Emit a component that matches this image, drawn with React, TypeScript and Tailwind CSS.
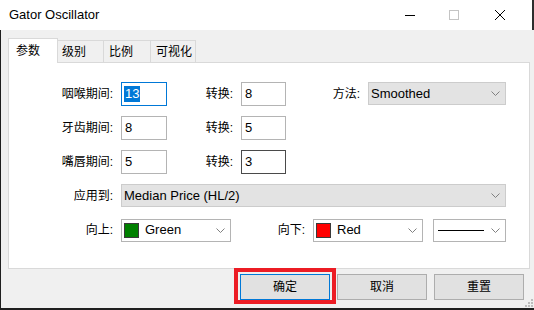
import React from "react";

function Chevron() {
  return (
    <svg width="9" height="5" viewBox="0 0 9 5" className="shrink-0">
      <path d="M0.5 0.5 L4.5 4.5 L8.5 0.5" fill="none" stroke="#808080" strokeWidth="1" />
    </svg>
  );
}

function TextBox({ value, width, state }: { value: string; width: string; state?: "focus" | "hover" }) {
  const border =
    state === "focus" ? "border-[#0078d7]" : state === "hover" ? "border-[#4a4a4a]" : "border-[#b4b4b4]";
  return (
    <div className={`ml-2 flex h-6 items-center border bg-white pl-[2px] text-[13px] ${width} ${border}`}>
      {state === "focus" ? (
        <span className="bg-[#0078d7] px-px leading-4 text-white">{value}</span>
      ) : (
        <span className="px-px">{value}</span>
      )}
    </div>
  );
}

function Label({ text, width }: { text: string; width: string }) {
  return <div className={`shrink-0 text-right text-[12px] ${width}`}>{text}</div>;
}

function ColorCombo({ color, name }: { color: string; name: string }) {
  return (
    <div className="ml-2 flex h-[23px] w-[110px] items-center border border-[#b4b4b4] bg-white pr-[5px]">
      <div className={`ml-[2px] size-[15px] border border-[#3a3a3a] ${color}`} />
      <span className="ml-[6px] flex-1 text-[13px]">{name}</span>
      <Chevron />
    </div>
  );
}

export default function App() {
  return (
    <div className="relative h-[310px] w-[534px] overflow-hidden bg-[#1f1f1f] font-['Liberation_Sans','Noto_Sans_CJK_SC',sans-serif] text-black">
      {/* title bar */}
      <div className="flex h-[30px] items-center border-r-2 border-[#2e2e2e] bg-white">
        <span className="ml-[9px] flex-1 text-[13px]">Gator Oscillator</span>
        <div className="mr-[34px] h-px w-[10px] bg-black" />
        <div className="mr-[36px] size-[10px] border border-[#c4c4c4]" />
        <svg width="10" height="10" viewBox="0 0 10 10" className="mr-[27px]">
          <path d="M0 0 L10 10 M10 0 L0 10" stroke="#000" strokeWidth="1" />
        </svg>
      </div>

      {/* body */}
      <div className="relative ml-px h-[278px] bg-[#f0f0f0] pl-[7px] pt-2">
        {/* tabs */}
        <div className="flex h-6 items-end text-[12px]">
          <div className="relative z-10 -mb-px flex h-[25px] w-[50px] items-center border border-b-0 border-[#d9d9d9] bg-white pl-[7px]">
            参数
          </div>
          <div className="flex h-[22px] w-[46px] items-center border-r border-t border-[#d9d9d9] pl-[4px]">级别</div>
          <div className="flex h-[22px] w-[47px] items-center border-r border-t border-[#d9d9d9] pl-[5px]">比例</div>
          <div className="flex h-[22px] w-[45px] items-center border-r border-t border-[#d9d9d9] pl-[5px]">可视化</div>
        </div>

        {/* panel */}
        <div className="flex h-[207px] w-[522px] flex-col gap-[10px] border border-[#d9d9d9] bg-white pt-[19px]">
          <div className="flex h-6 items-center">
            <Label text="咽喉期间:" width="w-[104px]" />
            <TextBox value="13" width="w-[46px]" state="focus" />
            <Label text="转换:" width="w-[66px]" />
            <TextBox value="8" width="w-[45px]" />
            <Label text="方法:" width="w-[74px]" />
            <div className="ml-2 flex h-[23px] w-[138px] items-center self-start border border-[#cccccc] bg-[#e3e3e3] pl-[2px] pr-[5px]">
              <span className="flex-1 text-[13px]">Smoothed</span>
              <Chevron />
            </div>
          </div>
          <div className="flex h-6 items-center">
            <Label text="牙齿期间:" width="w-[104px]" />
            <TextBox value="8" width="w-[46px]" />
            <Label text="转换:" width="w-[66px]" />
            <TextBox value="5" width="w-[45px]" />
          </div>
          <div className="flex h-6 items-center">
            <Label text="嘴唇期间:" width="w-[104px]" />
            <TextBox value="5" width="w-[46px]" />
            <Label text="转换:" width="w-[66px]" />
            <TextBox value="3" width="w-[45px]" state="hover" />
          </div>
          <div className="flex h-6 items-center">
            <Label text="应用到:" width="w-[104px]" />
            <div className="ml-2 flex h-[23px] w-[385px] items-center self-start border border-[#cccccc] bg-[#e3e3e3] pl-[2px] pr-[5px]">
              <span className="flex-1 text-[13px]">Median Price (HL/2)</span>
              <Chevron />
            </div>
          </div>
          <div className="flex h-6 items-center">
            <Label text="向上:" width="w-[104px]" />
            <ColorCombo color="bg-[#008000]" name="Green" />
            <Label text="向下:" width="w-[74px]" />
            <ColorCombo color="bg-[#ff0000]" name="Red" />
            <div className="ml-[10px] flex h-[23px] w-[73px] items-center border border-[#b4b4b4] bg-white pl-[4px] pr-[5px]">
              <div className="h-px w-[46px] bg-black" />
              <div className="flex-1" />
              <Chevron />
            </div>
          </div>
        </div>

        {/* buttons */}
        <div className="mt-[5px] flex justify-end gap-[7px] pr-[10px] text-[12px]">
          <button className="flex h-[26px] w-[90px] items-center justify-center border border-[#0078d7] bg-[#e1e1e1]">
            确定
          </button>
          <button className="flex h-[26px] w-[90px] items-center justify-center border border-[#adadad] bg-[#e1e1e1]">
            取消
          </button>
          <button className="flex h-[26px] w-[90px] items-center justify-center border border-[#adadad] bg-[#e1e1e1]">
            重置
          </button>
        </div>

        {/* resize grip */}
        <svg width="9" height="9" viewBox="0 0 9 9" className="absolute bottom-0 right-0">
          <rect x="6" y="0" width="2" height="2" fill="#bcbcbc" />
          <rect x="3" y="3" width="2" height="2" fill="#bcbcbc" />
          <rect x="6" y="3" width="2" height="2" fill="#bcbcbc" />
          <rect x="0" y="6" width="2" height="2" fill="#bcbcbc" />
          <rect x="3" y="6" width="2" height="2" fill="#bcbcbc" />
          <rect x="6" y="6" width="2" height="2" fill="#bcbcbc" />
        </svg>
      </div>

      {/* highlight annotation */}
      <div className="absolute left-[234px] top-[268px] h-[36px] w-[102px] border-4 border-[#ec1c24]" />
    </div>
  );
}
